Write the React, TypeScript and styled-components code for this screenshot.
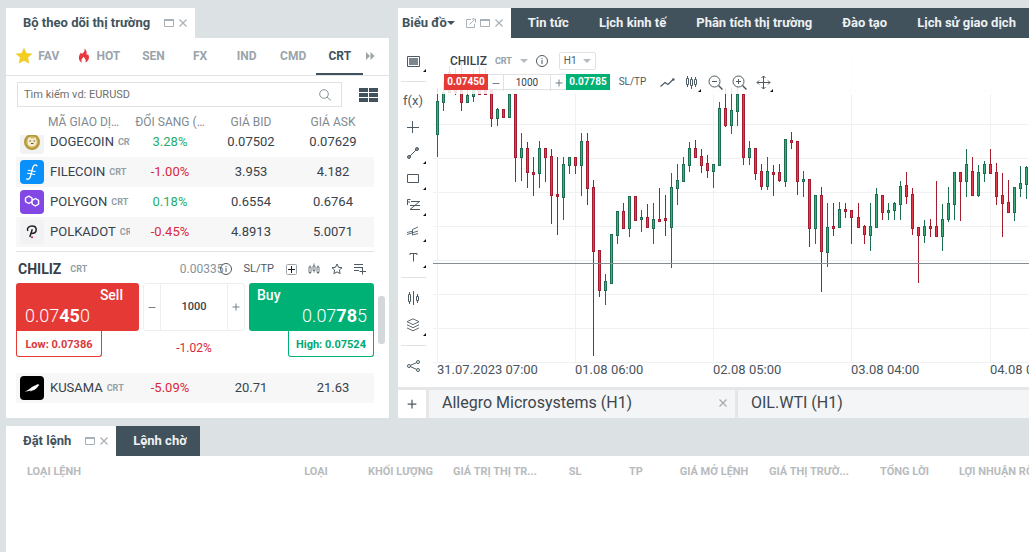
import React from 'react';
import styled, { createGlobalStyle, css } from 'styled-components';

const c = {
  page: '#dce1e4',
  dark: '#41525c',
  text: '#37424a',
  muted: '#87939a',
  tab: '#9aa4aa',
  icon: '#4d5a63',
  pale: '#b4bcc1',
  line: '#dfe3e5',
  soft: '#eceeef',
  red: '#e53935',
  green: '#00b176',
  down: '#d9283c',
  up: '#1fae6b',
};

const Global = createGlobalStyle`
  * { box-sizing: border-box; }
  html, body, #root { height: 100%; }
  body { margin: 0; background: ${c.page}; color: ${c.text}; font: 12px/16px Roboto, "Liberation Sans", sans-serif; overflow: hidden; }
  button, input, select { font: inherit; color: inherit; margin: 0; padding: 0; border: 0; background: none; border-radius: 0; }
  button, select { cursor: pointer; }
  svg { display: block; flex: none; }
`;

const Page = styled.div`
  display: flex;
  flex-direction: column;
  gap: 8px;
  min-height: 100%;
  padding: 8px 0 0 6px;
`;
const Top = styled.div`
  display: grid;
  grid-template-columns: minmax(383px, 3fr) minmax(0, 5fr);
  gap: 9px;
`;
const Panel = styled.section<{ $grow?: boolean }>`
  display: flex;
  flex-direction: column;
  min-width: 0;
  ${p => p.$grow && css`flex: 1;`}
`;
const TabStrip = styled.div<{ $dark?: boolean }>`
  display: flex;
  height: 30px;
  overflow: hidden;
  background: ${p => (p.$dark ? c.dark : 'transparent')};
`;
const ActiveTab = styled.div<{ $tight?: boolean }>`
  display: flex;
  align-items: center;
  flex: none;
  gap: ${p => (p.$tight ? 11 : 14)}px;
  padding: 0 7px 0 ${p => (p.$tight ? 4 : 17)}px;
  background: #fff;
`;
const TabName = styled.button`
  display: flex;
  align-items: center;
  font-size: 13px;
  font-weight: 700;
  color: ${c.dark};
  white-space: nowrap;
`;
const DarkTab = styled.button`
  flex: none;
  padding: 0 13px 0 17px;
  font-size: 13px;
  font-weight: 700;
  color: #eef1f2;
  background: ${c.dark};
  white-space: nowrap;
`;
const DarkTabs = styled.nav`
  display: flex;
  background: ${c.dark};
`;
const Body = styled.div`
  flex: 1;
  min-width: 0;
  background: #fff;
`;

const Categories = styled.nav`
  display: flex;
  height: 38px;
  padding: 0 12px 0 1px;
  border-bottom: 1px solid ${c.line};
`;
const Category = styled.button<{ $active?: boolean }>`
  display: flex;
  align-items: center;
  justify-content: center;
  gap: 6px;
  flex: 1 1 46px;
  font-size: 12px;
  font-weight: 700;
  color: ${p => (p.$active ? c.dark : c.tab)};
  border-bottom: 2px solid ${p => (p.$active ? c.dark : 'transparent')};
`;
const WideCategory = styled(Category)`
  flex: 1 1 61px;
`;
const MoreButton = styled(Category)`
  flex: 0 0 14px;
`;
const SearchRow = styled.div`
  display: flex;
  align-items: center;
  gap: 17px;
  padding: 6px 11px 0 11px;
`;
const SearchBox = styled.label`
  display: flex;
  align-items: center;
  flex: 1;
  height: 25px;
  padding: 0 10px 0 6px;
  border: 1px solid ${c.line};
  color: ${c.muted};
`;
const SearchInput = styled.input`
  flex: 1;
  min-width: 0;
  font-size: 11px;
  outline: none;
  &::placeholder { color: #6f6f6f; opacity: 1; }
`;
const IconButton = styled.button`
  display: flex;
  align-items: center;
  justify-content: center;
  flex: none;
  color: ${c.icon};
`;
const WindowButtons = styled.span`
  display: flex;
  gap: 4px;
  ${IconButton} { color: #a9b1b6; }
`;

const ListArea = styled.div`
  display: flex;
  gap: 4px;
  padding: 7px 4px 15px 10px;
`;
const Quotes = styled.table`
  display: block;
  flex: 1;
  min-width: 0;
  tbody, thead { display: block; }
`;
const quoteColumns = css`
  display: grid;
  grid-template-columns: 114fr 80fr 82fr 82fr;
`;
const HeadRow = styled.tr`
  ${quoteColumns}
  height: 21px;
`;
const HeadCell = styled.th<{ $first?: boolean }>`
  padding: 0 0 0 ${p => (p.$first ? 32 : 0)}px;
  font-size: 12px;
  font-weight: 400;
  color: #7f8a90;
  text-align: ${p => (p.$first ? 'left' : 'center')};
  white-space: nowrap;
`;
const QuoteRow = styled.tr<{ $shade?: boolean; $cut?: boolean }>`
  ${quoteColumns}
  height: ${p => (p.$cut ? 22 : 30)}px;
  align-content: end;
  overflow: hidden;
  background: ${p => (p.$shade ? '#f7f7f8' : '#fff')};
`;
const NameCell = styled.td`
  display: flex;
  align-items: center;
  height: 30px;
  padding: 0 0 0 4px;
  gap: 4px;
  overflow: hidden;
  font-size: 13px;
  white-space: nowrap;
`;
const CoinName = styled.span`
  padding-left: 2px;
`;
const Kind = styled.span`
  font-size: 9px;
  font-weight: 700;
  color: #93a0a7;
`;
const NumCell = styled.td<{ $tone?: 'up' | 'down' }>`
  height: 30px;
  padding: 0;
  font-size: 13px;
  line-height: 30px;
  text-align: center;
  color: ${p => (p.$tone ? c[p.$tone] : c.text)};
`;
const DetailRow = styled.tr`
  display: block;
`;
const DetailCell = styled.td`
  display: block;
  margin: 4px 0 16px;
  padding: 0;
  border-top: 1px solid ${c.line};
`;
const DetailHead = styled.div`
  display: flex;
  align-items: center;
  height: 31px;
  padding: 3px 8px 0 2px;
`;
const DetailName = styled.strong`
  flex: 1;
  display: flex;
  align-items: center;
  gap: 9px;
  font-size: 14px;
  font-weight: 700;
`;
const Spread = styled.span`
  margin-right: -4px;
  font-size: 12px;
  color: ${c.muted};
`;
const DetailTools = styled.div`
  display: flex;
  align-items: center;
  gap: 11px;
  color: ${c.icon};
`;
const TextButton = styled.button`
  padding: 0 1px;
  font-size: 11px;
  color: ${c.icon};
`;
const Deal = styled.div`
  display: grid;
  grid-template-columns: 123fr 102px 125fr;
  column-gap: 4px;
`;
const DealButton = styled.button<{ $buy?: boolean }>`
  display: flex;
  flex-direction: column;
  justify-content: space-between;
  height: 48px;
  padding: 4px ${p => (p.$buy ? '7px 5px 8px' : '16px 5px 9px')};
  border-radius: 3px;
  border-bottom-left-radius: ${p => (p.$buy ? 3 : 0)}px;
  border-bottom-right-radius: ${p => (p.$buy ? 0 : 3)}px;
  color: #fff;
  background: ${p => (p.$buy ? c.green : c.red)};
`;
const DealName = styled.span<{ $end?: boolean }>`
  align-self: ${p => (p.$end ? 'flex-end' : 'flex-start')};
  font-size: 14px;
  font-weight: 500;
`;
const DealPrice = styled(DealName)`
  font-size: 18px;
  font-weight: 300;
  line-height: 20px;
  b { font-weight: 700; }
`;
const Stepper = styled.div`
  display: grid;
  grid-template-columns: 16px 1fr 16px;
  height: 48px;
  border: 1px solid ${c.soft};
  border-radius: 3px;
`;
const StepButton = styled(IconButton)`
  color: #71808a;
`;
const Amount = styled.input`
  min-width: 0;
  width: 100%;
  font-size: 11px;
  font-weight: 500;
  text-align: center;
  border: solid ${c.soft};
  border-width: 0 1px;
  outline: none;
`;
const Limit = styled.div<{ $high?: boolean }>`
  justify-self: ${p => (p.$high ? 'end' : 'start')};
  width: 86px;
  height: 26px;
  font-size: 11px;
  font-weight: 700;
  line-height: 27px;
  text-align: center;
  white-space: nowrap;
  color: ${p => (p.$high ? '#00a870' : '#d9383d')};
  border: 1px solid ${p => (p.$high ? c.green : c.red)};
  border-top: 0;
  border-radius: 0 0 3px 3px;
`;
const DayChange = styled.div`
  padding-top: 9px;
  font-size: 12px;
  text-align: center;
  color: ${c.down};
`;
const ScrollTrack = styled.div`
  width: 7px;
  padding-top: 182px;
`;
const ScrollThumb = styled.div`
  height: 48px;
  border-radius: 3px;
  background: #d5d8da;
`;

const ChartBody = styled(Body)`
  display: flex;
  height: 349px;
  flex: none;
`;
const Tools = styled.div`
  display: flex;
  flex-direction: column;
  width: 35px;
  flex: none;
  padding: 10px 7px 0 3px;
`;
const ToolButton = styled(IconButton)<{ $menu?: boolean; $tall?: boolean }>`
  position: relative;
  width: 24px;
  height: ${p => (p.$tall ? 27 : 26)}px;
  font-size: 13px;
  ${p => p.$menu && css`
    &::after {
      content: '';
      position: absolute;
      right: -1px;
      bottom: 2px;
      border: solid transparent;
      border-width: 0 0 3px 3px;
      border-bottom-color: #111;
    }
  `}
`;
const ToolRule = styled.hr`
  width: 100%;
  margin: 7px 0 6px;
  border: 0;
  border-top: 1px solid ${c.line};
`;
const Plot = styled.div`
  position: relative;
  flex: 1;
  min-width: 0;
  overflow: hidden;
`;
const PlotSvg = styled.svg`
  width: 100%;
  height: 349px;
`;
const PlotHeader = styled.div`
  position: absolute;
  inset: 12px 0 auto 0;
  height: 44px;
  padding: 2px 0 0 11px;
  background: rgba(255, 255, 255, 0.86);
`;
const SymbolRow = styled.div`
  display: flex;
  align-items: center;
  gap: 8px;
  height: 18px;
  padding-left: 6px;
`;
const SymbolName = styled.button`
  display: flex;
  align-items: center;
  gap: 8px;
  font-size: 12px;
  font-weight: 500;
  svg { color: ${c.pale}; }
`;
const PeriodBox = styled.label`
  display: flex;
  align-items: center;
  width: 37px;
  height: 18px;
  margin-left: 3px;
  padding: 0 4px;
  border: 1px solid ${c.line};
  border-radius: 2px;
  color: ${c.pale};
`;
const Period = styled.select`
  flex: 1;
  min-width: 0;
  font-size: 10px;
  color: ${c.icon};
  appearance: none;
  outline: none;
`;
const TradeRow = styled.div`
  display: flex;
  align-items: center;
  height: 16px;
  margin-top: 4px;
`;
const PriceButton = styled.button<{ $buy?: boolean }>`
  width: 44px;
  height: 16px;
  font-size: 10px;
  font-weight: 700;
  color: #fff;
  background: ${p => (p.$buy ? c.green : c.red)};
`;
const SmallStepper = styled.div`
  display: grid;
  grid-template-columns: 15px 1fr 15px;
  width: 78px;
  height: 16px;
  border: solid ${c.line};
  border-width: 1px 0;
  background: #fff;
`;
const SmallAmount = styled(Amount)`
  font-size: 10px;
  font-weight: 400;
  border-color: ${c.line};
`;
const SltpSmall = styled(TextButton)`
  width: 45px;
  font-size: 10px;
`;
const ChartTools = styled.div`
  display: flex;
`;
const ChartTabs = styled.div`
  display: grid;
  grid-template-columns: 28px 306px minmax(0, 1fr);
  gap: 3px;
  height: 31px;
  padding-top: 3px;
  background: #e4e6e7;
`;
const AddButton = styled(IconButton)`
  background: #fff;
`;
const ChartTab = styled.div`
  display: flex;
  align-items: center;
  justify-content: space-between;
  padding: 0 7px 2px 13px;
  background: #f4f5f6;
  color: #a4abb0;
`;
const ChartTabName = styled.button`
  font-size: 16px;
  color: #3d464d;
  white-space: nowrap;
`;

const Orders = styled(Body)`
  overflow: hidden;
`;
const OrderTable = styled.table`
  width: 100%;
  min-width: 1083px;
  table-layout: fixed;
  border-collapse: collapse;
`;
const OrderHead = styled.th<{ $w: number; $left?: boolean; $pad?: number }>`
  width: ${p => p.$w}px;
  height: 31px;
  padding: 0 0 0 ${p => p.$pad || 0}px;
  font-size: 11px;
  font-weight: 700;
  color: #b8bbbd;
  text-align: ${p => (p.$left ? 'left' : 'center')};
  white-space: nowrap;
`;

/* ---- icons ---- */
type IconProps = { w?: number; h?: number; box?: string; sw?: number; children: React.ReactNode };
const Icon = ({ w = 16, h, box, sw = 1, children }: IconProps) => (
  <svg width={w} height={h ?? w} viewBox={box ?? `0 0 ${w} ${h ?? w}`} fill="none" stroke="currentColor" strokeWidth={sw} aria-hidden="true">
    {children}
  </svg>
);
const MaxIcon = () => <Icon w={10} h={10}><path d="M.5 1.500h9v7h-9z" /><path d="M0 2h10" strokeWidth="2" /></Icon>;
const CloseIcon = () => <Icon w={10} h={10}><path d="m1.500 1.500 7 7m0-7-7 7" strokeWidth="1.200" /></Icon>;
const PopIcon = () => <Icon w={10} h={10}><path d="M5 1.500H.5v8h8V6M3.500 6.500l5-5M6 1h3.500v3.500" /></Icon>;
const Caret = ({ w = 8 }: { w?: number }) => <Icon w={w} h={4} box="0 0 8 4"><path d="M0 0h8L4 4z" fill="currentColor" stroke="none" /></Icon>;
const StarIcon = () => (
  <Icon w={16}><path d="m8 .5 2.200 4.900 5.300.6-3.900 3.600 1.100 5.400L8 12.300 3.300 15l1.100-5.400L.5 6l5.300-.6z" fill="#f6cf1e" stroke="#eabf10" strokeWidth=".6" /></Icon>
);
const FlameIcon = () => (
  <Icon w={12} h={15}><path d="M6.500.5c.6 2.600-.6 3.700-2 5C3.600 6.400 3.400 5.300 3 4.600 1.500 6.700.6 8.300.9 10.500c.3 2.200 1.500 3.500 3 4-1.300-2.300.2-3.800 1.500-5.800 1.700 1.400 3 3.500 2 5.700 2-.7 3.600-2.600 3.600-5.200 0-1.400-.6-2.500-1.100-3.300-.3.700-.7 1-1.200 1.200C9 4.200 8.300 2 6.500.5z" fill="#e8393f" stroke="none" /></Icon>
);
const InfoIcon = () => <Icon w={12}><circle cx="6" cy="6" r="5.500" /><path d="M6 5v4M6 3v1.200" /></Icon>;
const PlusIcon = ({ s = 8 }: { s?: number }) => <Icon w={s} box="0 0 8 8"><path d="M4 .5v7M.5 4h7" /></Icon>;
const MinusIcon = () => <Icon w={8}><path d="M.5 4.500h7" /></Icon>;
const MiniCandles = () => (
  <Icon w={12} h={12}><path d="M1 4h2v5.500H1zM5 3h2v4.500H5zM9 4h2v5.500H9zM2 2.500V4m0 5.500V11M6 .5V3m0 4.500v2M10 2.500V4m0 5.500V11" strokeWidth=".8" /></Icon>
);

const Logo = ({ coin }: { coin: string }) => (
  <svg width="24" height="24" viewBox="0 0 24 24" aria-hidden="true">
    {coin === 'DOGECOIN' && (
      <g>
        <rect width="24" height="24" rx="3" fill="#f2f2f4" />
        <circle cx="12" cy="12" r="8" fill="#b59a3c" />
        <circle cx="12" cy="12" r="5.800" fill="#d5bd68" />
        <path d="M8 8.500 9.500 7l2 1.500h2.500L15.500 7l.6 3c1.500 3.500-.5 6.500-4 6.500s-5-2.500-4.300-5z" fill="#f3ead0" />
        <path d="M9.500 11h1.500m2.500 0H15M11 13.500h2.500" stroke="#6a5523" />
      </g>
    )}
    {coin === 'FILECOIN' && (
      <g fill="none" stroke="#fff" strokeLinecap="round">
        <rect width="24" height="24" rx="4" fill="#0a90fb" stroke="none" />
        <path d="M17 5.800c-1.500-1.800-3.600-.8-4.300 2L10.600 16c-.6 2.400-2 3.800-4.100 3" strokeWidth="1.300" />
        <path d="m8.200 10.200 7 1.300M7.600 13.200l7 1.300" strokeWidth="1.100" />
      </g>
    )}
    {coin === 'POLYGON' && (
      <g fill="none" stroke="#fff" strokeWidth="1.400" strokeLinejoin="round">
        <rect width="24" height="24" rx="4" fill="#8247e5" stroke="none" />
        <path d="m12 11.500-3.200 2-3.300-1.900V8l3.300-1.900L12 8l.1 6 3.200 2 3.300-1.900v-3.700l-3.300-1.900-3.200 1.900" />
      </g>
    )}
    {coin === 'POLKADOT' && (
      <g fill="none" stroke="#222">
        <rect width="24" height="24" rx="3" fill="#f2f2f4" stroke="none" />
        <path d="M7.800 11C6.500 8.300 8.800 6 12 6c2.700 0 4.200 1.500 4.200 3.700 0 2.300-1.700 3.800-5 3.800M12.300 9.300 9.800 17" strokeWidth="1.500" />
        <circle cx="12" cy="17.300" r="1" fill="#c2185b" stroke="none" />
      </g>
    )}
    {coin === 'KUSAMA' && (
      <g>
        <rect width="24" height="24" rx="4" fill="#000" />
        <path d="M4.500 15.600c3-.8 5-2.400 7.200-4.300 1.500-1.300 3-1.900 4.300-2.100.7-.9 2-1.100 2.600-.6l1 .7-1.300.4c-.6 1.300-1.300 2.300-2.800 3.200-1 1-2.300 1.400-3.700 1.600L10.600 16l.2-1.500c-2 .5-4.200 1-6.300 1.100z" fill="#fff" />
      </g>
    )}
  </svg>
);

/* ---- data ---- */
type Quote = { name: string; kind: string; change: string; bid: string; ask: string };
const quotes: Quote[] = [
  { name: 'DOGECOIN', kind: 'CRT', change: '3.28%', bid: '0.07502', ask: '0.07629' },
  { name: 'FILECOIN', kind: 'CRT', change: '-1.00%', bid: '3.953', ask: '4.182' },
  { name: 'POLYGON', kind: 'CRT', change: '0.18%', bid: '0.6554', ask: '0.6764' },
  { name: 'POLKADOT', kind: 'CRT', change: '-0.45%', bid: '4.8913', ask: '5.0071' },
];
const kusama: Quote = { name: 'KUSAMA', kind: 'CRT', change: '-5.09%', bid: '20.71', ask: '21.63' };

// direction, high, body top, body bottom, low
type Candle = [0 | 1, number, number, number, number];
const candles: Candle[] = [
  [1, 50, 63, 97, 119], [1, 44, 54, 65, 73], [0, 28, 34, 55, 55], [0, 30, 36, 55, 57], [0, 24, 50, 65, 73],
  [1, 40, 57, 65, 65], [1, 32, 52, 59, 64], [0, 28, 36, 57, 57], [0, 30, 38, 57, 57], [0, 48, 48, 81, 89],
  [1, 70, 71, 81, 88], [0, 71, 71, 80, 80], [1, 56, 56, 80, 80], [0, 56, 56, 120, 144], [1, 95, 110, 120, 143],
  [0, 104, 110, 135, 150], [0, 119, 134, 137, 158], [1, 103, 110, 136, 150], [0, 110, 110, 120, 144], [0, 111, 118, 158, 186],
  [0, 119, 156, 159, 197], [1, 119, 126, 160, 182], [1, 119, 119, 128, 136], [0, 119, 119, 128, 136], [1, 95, 103, 128, 158],
  [0, 95, 103, 151, 167], [0, 142, 149, 214, 318], [0, 212, 212, 253, 259], [1, 236, 243, 253, 267], [1, 196, 196, 246, 246],
  [1, 173, 173, 198, 206], [0, 165, 173, 191, 191], [1, 158, 158, 191, 199], [0, 158, 158, 183, 183], [1, 172, 179, 182, 194],
  [0, 166, 179, 190, 190], [1, 165, 181, 191, 206], [0, 150, 181, 184, 184], [0, 157, 180, 183, 198], [1, 135, 149, 190, 230],
  [1, 126, 142, 151, 167], [1, 119, 126, 144, 144], [1, 104, 110, 128, 134], [0, 102, 110, 120, 120], [0, 111, 118, 128, 135],
  [0, 117, 125, 133, 140], [1, 126, 126, 134, 150], [1, 64, 70, 128, 128], [0, 50, 70, 88, 89], [1, 50, 72, 88, 96],
  [1, 48, 56, 74, 88], [0, 56, 56, 120, 127], [1, 103, 110, 120, 127], [0, 110, 110, 136, 142], [0, 126, 133, 149, 152],
  [1, 119, 133, 149, 152], [0, 127, 134, 137, 158], [0, 126, 134, 143, 144], [1, 101, 101, 144, 149], [0, 94, 102, 105, 111],
  [0, 103, 103, 144, 157], [1, 133, 141, 144, 159], [0, 141, 141, 191, 209], [1, 157, 157, 191, 206], [0, 149, 157, 214, 254],
  [1, 165, 189, 215, 229], [0, 165, 188, 191, 198], [1, 164, 171, 190, 190], [0, 165, 171, 174, 180], [0, 172, 172, 180, 206],
  [0, 165, 179, 190, 190], [0, 187, 188, 197, 206], [1, 165, 188, 198, 213], [1, 150, 156, 190, 190], [0, 157, 157, 175, 182],
  [1, 165, 172, 175, 182], [1, 164, 165, 173, 182], [1, 143, 148, 167, 182], [0, 134, 147, 159, 166], [0, 150, 156, 191, 197],
  [0, 189, 189, 198, 245], [1, 182, 188, 198, 205], [0, 181, 188, 191, 199], [0, 143, 188, 199, 199], [1, 166, 181, 199, 213],
  [1, 149, 165, 182, 184], [1, 134, 134, 167, 182], [0, 134, 134, 144, 183], [1, 111, 126, 144, 159], [0, 119, 133, 158, 158],
  [1, 127, 134, 158, 159], [1, 123, 126, 136, 144], [0, 111, 126, 136, 136], [0, 125, 134, 159, 167], [0, 135, 157, 166, 199],
  [0, 142, 164, 175, 175], [1, 149, 149, 175, 183], [1, 128, 145, 151, 159], [1, 128, 129, 147, 161],
];
const candleX = (i: number) => 4 + Math.floor(i * 6.0144);
const gridRows = [52, 86, 120, 154, 188, 222, 256, 290, 324];
const timeMarks = ['31.07.2023 07:00', '01.08 06:00', '02.08 05:00', '03.08 04:00', '04.08 03:00'];

const orderColumns: [string, number][] = [
  ['LOẠI', 66], ['KHỐI LƯỢNG', 103], ['GIÁ TRỊ THỊ TR...', 86], ['SL', 74], ['TP', 48],
  ['GIÁ MỞ LỆNH', 108], ['GIÁ THỊ TRƯỜ...', 82], ['TỔNG LỜI', 109],
];

const QuoteLine = ({ q, shade, cut }: { q: Quote; shade?: boolean; cut?: boolean }) => (
  <QuoteRow $shade={shade} $cut={cut}>
    <NameCell><Logo coin={q.name} /><CoinName>{q.name}</CoinName><Kind>{q.kind}</Kind></NameCell>
    <NumCell $tone={q.change.startsWith('-') ? 'down' : 'up'}>{q.change}</NumCell>
    <NumCell>{q.bid}</NumCell>
    <NumCell>{q.ask}</NumCell>
  </QuoteRow>
);

const WindowControls = ({ pop }: { pop?: boolean }) => (
  <WindowButtons>
    {pop && <IconButton aria-label="Mở cửa sổ"><PopIcon /></IconButton>}
    <IconButton aria-label="Phóng to"><MaxIcon /></IconButton>
    <IconButton aria-label="Đóng"><CloseIcon /></IconButton>
  </WindowButtons>
);

const MarketWatch = () => (
  <Panel>
    <TabStrip>
      <ActiveTab><TabName>Bộ theo dõi thị trường</TabName><WindowControls /></ActiveTab>
    </TabStrip>
    <Body>
      <Categories>
        <WideCategory><StarIcon />FAV</WideCategory>
        <WideCategory><FlameIcon />HOT</WideCategory>
        <Category>SEN</Category>
        <Category>FX</Category>
        <Category>IND</Category>
        <Category>CMD</Category>
        <Category $active>CRT</Category>
        <MoreButton aria-label="Thêm">
          <Icon w={9} h={8}><path d="M0 0l4 4-4 4zM4.500 0l4 4-4 4z" fill="currentColor" stroke="none" /></Icon>
        </MoreButton>
      </Categories>
      <SearchRow>
        <SearchBox>
          <SearchInput aria-label="Tìm kiếm" placeholder="Tìm kiếm vd: EURUSD" />
          <Icon w={12}><circle cx="5" cy="5" r="4.300" /><path d="m8 8 4 3.500" /></Icon>
        </SearchBox>
        <IconButton aria-label="Hiển thị">
          <Icon w={19} h={14}><path d="M0 0h9v4H0zM10 0h9v4h-9zM0 5h9v4H0zM10 5h9v4h-9zM0 10h9v4H0zM10 10h9v4h-9z" fill={c.dark} stroke="none" /></Icon>
        </IconButton>
      </SearchRow>
      <ListArea>
        <Quotes>
          <thead>
            <HeadRow>
              <HeadCell $first>MÃ GIAO DỊ…</HeadCell>
              <HeadCell>ĐỔI SANG (…</HeadCell>
              <HeadCell>GIÁ BID</HeadCell>
              <HeadCell>GIÁ ASK</HeadCell>
            </HeadRow>
          </thead>
          <tbody>
            {quotes.map((q, i) => <QuoteLine key={q.name} q={q} shade={i % 2 === 1} cut={i === 0} />)}
            <DetailRow>
              <DetailCell colSpan={4}>
                <DetailHead>
                  <DetailName>CHILIZ<Kind>CRT</Kind></DetailName>
                  <Spread>0.00335</Spread>
                  <DetailTools>
                    <IconButton aria-label="Thông tin"><InfoIcon /></IconButton>
                    <TextButton>SL/TP</TextButton>
                    <IconButton aria-label="Thêm"><Icon w={11}><rect x=".5" y=".5" width="10" height="10" rx="1" stroke="#9aa4aa" /><path d="M5.500 2v7M2 5.500h7" stroke="#222" /></Icon></IconButton>
                    <IconButton aria-label="Biểu đồ"><MiniCandles /></IconButton>
                    <IconButton aria-label="Yêu thích"><Icon w={12}><path d="m6 1 1.500 3.300 3.500.4-2.600 2.400.7 3.500L6 8.900l-3.100 1.700.7-3.500L1 4.700l3.500-.4z" strokeLinejoin="round" /></Icon></IconButton>
                    <IconButton aria-label="Thêm vào danh sách"><Icon w={12}><path d="M0 1.500h9M0 4.500h9M0 7.500h5M8.500 5v6.500M5.500 8.500H12" /></Icon></IconButton>
                  </DetailTools>
                </DetailHead>
                <Deal>
                  <DealButton><DealName $end>Sell</DealName><DealPrice>0.07<b>45</b>0</DealPrice></DealButton>
                  <Stepper>
                    <StepButton aria-label="Giảm"><MinusIcon /></StepButton>
                    <Amount aria-label="Khối lượng" defaultValue="1000" />
                    <StepButton aria-label="Tăng"><PlusIcon /></StepButton>
                  </Stepper>
                  <DealButton $buy><DealName>Buy</DealName><DealPrice $end>0.07<b>78</b>5</DealPrice></DealButton>
                  <Limit>Low: 0.07386</Limit>
                  <DayChange>-1.02%</DayChange>
                  <Limit $high>High: 0.07524</Limit>
                </Deal>
              </DetailCell>
            </DetailRow>
            <QuoteLine q={kusama} shade />
          </tbody>
        </Quotes>
        <ScrollTrack><ScrollThumb /></ScrollTrack>
      </ListArea>
    </Body>
  </Panel>
);

const ChartToolbar = () => (
  <Tools>
    <ToolButton $menu aria-label="Bố cục"><Icon w={13} h={11}><path d="M.5.5h12v10H.5z" /><path d="M2 2h9v7H2z" fill="#7b868d" stroke="none" /></Icon></ToolButton>
    <ToolRule />
    <ToolButton>f(x)</ToolButton>
    <ToolButton aria-label="Con trỏ"><Icon w={12}><path d="M5.500 0v12M0 6.500h12" /></Icon></ToolButton>
    <ToolButton $menu aria-label="Đường"><Icon w={12}><circle cx="2" cy="10" r="1.500" fill="#8d979d" /><circle cx="10" cy="2" r="1.500" fill="#8d979d" /><path d="m3 9 6-6" /></Icon></ToolButton>
    <ToolButton $menu aria-label="Hình"><Icon w={12} h={10}><path d="M.5.5h11v8H.5z" /></Icon></ToolButton>
    <ToolButton $menu aria-label="Fibonacci"><Icon w={13} h={12}><path d="M.5 6V.5h3M.5 3h2.500M4 2.500h9M3 6.500h10M3 10.500h10M12.500 2.500 3 10.500" /></Icon></ToolButton>
    <ToolButton $menu aria-label="Pitchfork"><Icon w={12} h={10}><path d="M5.500 3.500V9M0 8.500 11 5M5.500 3.500 11 1M5.500 9l5.500-1.500M0 6.500l5.500-1.300" strokeWidth=".9" /></Icon></ToolButton>
    <ToolButton $menu aria-label="Văn bản"><Icon w={9} h={9}><path d="M1 2V.5h7V2M4.500.5v8" /></Icon></ToolButton>
    <ToolRule />
    <ToolButton $tall aria-label="So sánh"><Icon w={12} h={14}><path d="M1.500 3.500h2v7h-2zM2.500 1v2.500m0 7V13M6.500 0v14M9.500 5.500h2v4h-2zM10.500 3v2.500m0 4V12" /></Icon></ToolButton>
    <ToolButton $menu $tall aria-label="Lớp"><Icon w={14} h={14}><path d="m7 .8 6 2.900-6 2.900-6-2.900zM1 6.800l6 2.900 6-2.900M1 9.900l6 2.900 6-2.900" strokeWidth=".9" /></Icon></ToolButton>
    <ToolRule />
    <ToolButton $tall aria-label="Chia sẻ"><Icon w={13} h={12}><circle cx="2" cy="6" r="1.500" /><circle cx="11" cy="2" r="1.500" /><circle cx="11" cy="10" r="1.500" /><path d="m3.400 5.400 6.200-2.800M3.400 6.600l6.200 2.800" /></Icon></ToolButton>
  </Tools>
);

const Glass = ({ plus }: { plus?: boolean }) => (
  <Icon w={15}><circle cx="6.500" cy="6.500" r="5.500" /><path d="m10.500 10.500 4 4" strokeWidth="1.500" /><path d={plus ? 'M6.500 4v5M4 6.500h5' : 'M4 6.500h5'} /></Icon>
);

const MenuIconButton = styled(ToolButton)`
  height: 20px;
  &::after { right: 2px; bottom: 0; }
`;

const Chart = () => (
  <Panel>
    <TabStrip $dark>
      <ActiveTab $tight><TabName>Biểu đồ<Caret /></TabName><WindowControls pop /></ActiveTab>
      <DarkTabs>
        {['Tin tức', 'Lịch kinh tế', 'Phân tích thị trường', 'Đào tạo', 'Lịch sử giao dịch'].map(t => <DarkTab key={t}>{t}</DarkTab>)}
      </DarkTabs>
    </TabStrip>
    <ChartBody>
      <ChartToolbar />
      <Plot>
        <PlotSvg role="img" aria-label="CHILIZ H1">
          <g stroke="#eff1f2" shapeRendering="crispEdges">
            {gridRows.map(y => <line key={y} x1="0" x2="100%" y1={y + 0.5} y2={y + 0.5} />)}
            {timeMarks.map((t, i) => <line key={t} x1={candleX(i * 23) + 0.5} x2={candleX(i * 23) + 0.5} y1="18" y2="324" />)}
          </g>
          <g shapeRendering="crispEdges">
            {candles.map(([up, high, top, bottom, low], i) => {
              const x = candleX(i);
              const edge = up ? '#1b6e50' : '#a31c2f';
              return (
                <g key={i}>
                  <rect x={x} y={high} width="1" height={low - high} fill={edge} />
                  <rect x={x - 1} y={top} width="3" height={bottom - top} fill={edge} />
                  <rect x={x} y={top + 1} width="1" height={Math.max(bottom - top - 2, 1)} fill={up ? '#3fae7d' : '#e8394a'} />
                </g>
              );
            })}
          </g>
          <line x1="0" x2="100%" y1="225.5" y2="225.5" stroke="#858c92" />
          <g fill="#4a545b" fontSize="13" fontFamily="Roboto, sans-serif">
            {timeMarks.map((t, i) => <text key={t} x={candleX(i * 23)} y="336">{t}</text>)}
          </g>
        </PlotSvg>
        <PlotHeader>
          <SymbolRow>
            <SymbolName>CHILIZ<Kind>CRT</Kind><Caret /></SymbolName>
            <IconButton aria-label="Thông tin"><InfoIcon /></IconButton>
            <PeriodBox>
              <Period aria-label="Khung thời gian" defaultValue="H1"><option>H1</option></Period>
              <Caret />
            </PeriodBox>
          </SymbolRow>
          <TradeRow>
            <PriceButton>0.07450</PriceButton>
            <SmallStepper>
              <StepButton aria-label="Giảm"><MinusIcon /></StepButton>
              <SmallAmount aria-label="Khối lượng" defaultValue="1000" />
              <StepButton aria-label="Tăng"><PlusIcon /></StepButton>
            </SmallStepper>
            <PriceButton $buy>0.07785</PriceButton>
            <SltpSmall>SL/TP</SltpSmall>
            <ChartTools>
              <MenuIconButton aria-label="Kiểu đường"><Icon w={15} h={9}><path d="M.5 8.500 5 4.500l3 2 5-5" strokeWidth="1.200" /><circle cx="13.300" cy="1.500" r="1.300" fill="currentColor" stroke="none" /></Icon></MenuIconButton>
              <MenuIconButton $menu aria-label="Kiểu nến"><Icon w={13} h={14}><path d="M1.500 3.500h2v6h-2zM5.500 4.500h2v6h-2zM9.500 4.500h2v5h-2zM2.500 1v2.500m0 6V12M6.500 2v2.500m0 6V14M10.500 2v2.500m0 5V12" /></Icon></MenuIconButton>
              <MenuIconButton aria-label="Thu nhỏ"><Glass /></MenuIconButton>
              <MenuIconButton aria-label="Phóng to"><Glass plus /></MenuIconButton>
              <MenuIconButton $menu aria-label="Di chuyển"><Icon w={15}><path d="M7.500 1v13M1 7.500h13M5.500 3l2-2 2 2M5.500 12l2 2 2-2M3 5.500l-2 2 2 2M12 5.500l2 2-2 2" /></Icon></MenuIconButton>
            </ChartTools>
          </TradeRow>
        </PlotHeader>
      </Plot>
    </ChartBody>
    <ChartTabs>
      <AddButton aria-label="Thêm biểu đồ"><PlusIcon s={10} /></AddButton>
      <ChartTab><ChartTabName>Allegro Microsystems (H1)</ChartTabName><CloseIcon /></ChartTab>
      <ChartTab><ChartTabName>OIL.WTI (H1)</ChartTabName></ChartTab>
    </ChartTabs>
  </Panel>
);

const OrdersPanel = () => (
  <Panel $grow>
    <TabStrip>
      <ActiveTab><TabName>Đặt lệnh</TabName><WindowControls /></ActiveTab>
      <DarkTabs><DarkTab>Lệnh chờ</DarkTab></DarkTabs>
    </TabStrip>
    <Orders>
      <OrderTable>
        <thead>
          <tr>
            <OrderHead $w={277} $left $pad={21}>LOẠI LỆNH</OrderHead>
            {orderColumns.map(([label, w]) => <OrderHead key={label} $w={w}>{label}</OrderHead>)}
            <OrderHead $w={130} $left>LỢI NHUẬN RÒNG</OrderHead>
          </tr>
        </thead>
      </OrderTable>
    </Orders>
  </Panel>
);

export default function App() {
  return (
    <>
      <Global />
      <Page>
        <Top>
          <MarketWatch />
          <Chart />
        </Top>
        <OrdersPanel />
      </Page>
    </>
  );
}
